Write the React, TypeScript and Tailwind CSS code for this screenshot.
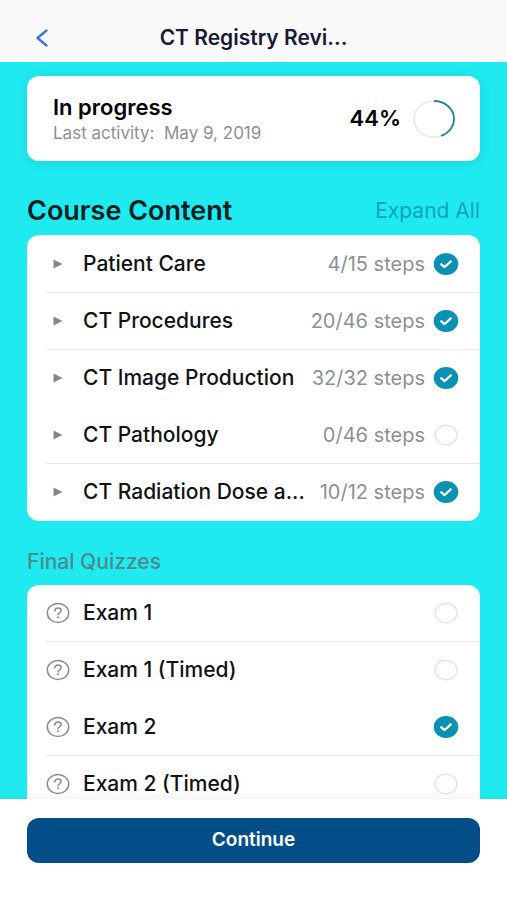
import { useState } from 'react';

interface Lesson {
  title: string;
  steps: string;
  done: boolean;
  divider: boolean;
}

interface Quiz {
  title: string;
  done: boolean;
  divider: boolean;
}

const lessons: Lesson[] = [
  { title: 'Patient Care', steps: '4/15 steps', done: true, divider: true },
  { title: 'CT Procedures', steps: '20/46 steps', done: true, divider: true },
  { title: 'CT Image Production', steps: '32/32 steps', done: true, divider: false },
  { title: 'CT Pathology', steps: '0/46 steps', done: false, divider: true },
  { title: 'CT Radiation Dose a...', steps: '10/12 steps', done: true, divider: false },
];

const quizzes: Quiz[] = [
  { title: 'Exam 1', done: false, divider: true },
  { title: 'Exam 1 (Timed)', done: false, divider: false },
  { title: 'Exam 2', done: true, divider: true },
  { title: 'Exam 2 (Timed)', done: false, divider: false },
];

function StatusIcon({ done }: { done: boolean }) {
  return (
    <svg width="26" height="24" viewBox="0 0 26 24" fill="none" className="shrink-0" role="img" aria-label={done ? 'Completed' : 'Not completed'}>
      {done ? (
        <>
          <ellipse cx="13" cy="12" rx="12.3" ry="11" fill="#0891b2" />
          <path d="M8.3 12.3l3.3 2.7 6.2-5.6" stroke="#fff" strokeWidth="2.3" strokeLinecap="round" strokeLinejoin="round" />
        </>
      ) : (
        <ellipse cx="13" cy="12" rx="11" ry="9.8" stroke="#e3e4e5" strokeWidth="1.4" />
      )}
    </svg>
  );
}

function QuestionIcon() {
  return (
    <svg width="24" height="22" viewBox="0 0 24 22" fill="none" stroke="#8a8c8f" className="shrink-0" aria-hidden="true">
      <ellipse cx="12" cy="11" rx="10.7" ry="9.5" strokeWidth="1.5" />
      <path d="M8.8 8.9c.1-1.7 1.4-2.8 3.2-2.8s3.2 1 3.2 2.5c0 1.1-.7 1.7-1.7 2.2-1 .6-1.5 1-1.5 2" strokeWidth="1.5" strokeLinecap="round" />
      <circle cx="12" cy="15.2" r="1" fill="#8a8c8f" stroke="none" />
    </svg>
  );
}

function ProgressRing({ value }: { value: number }) {
  return (
    <svg width="42" height="38" viewBox="0 0 42 38" fill="none" className="shrink-0" aria-hidden="true">
      <ellipse cx="21" cy="19" rx="20" ry="18" stroke="#e8e9ea" strokeWidth="1.6" />
      <path
        d="M21 1a20 18 0 0 1 0 36a20 18 0 0 1 0-36"
        stroke="#1c87a3"
        strokeWidth="1.8"
        pathLength={100}
        strokeDasharray={`${value} 100`}
      />
    </svg>
  );
}

export default function App() {
  const [openLesson, setOpenLesson] = useState<string | null>(null);

  return (
    <div className="flex h-screen flex-col bg-white font-['Inter',sans-serif] text-[#111214]">
      {/* Header */}
      <header className="grid shrink-0 grid-cols-[1fr_auto_1fr] items-center bg-[#f9f9f9] px-7 pt-[23px] pb-[9px]">
        <button type="button" aria-label="Back" className="flex w-7 justify-center">
          <svg width="14" height="20" viewBox="0 0 14 20" fill="none" aria-hidden="true">
            <path d="M11.5 2.5L2.5 10l9 7.5" stroke="#3b76d9" strokeWidth="2.4" strokeLinecap="round" strokeLinejoin="round" />
          </svg>
        </button>
        <h1 className="text-[21px] leading-[30px] font-semibold text-[#1b1938]">CT Registry Revi...</h1>
      </header>

      {/* Course */}
      <main className="min-h-0 flex-1 overflow-hidden bg-[#1eeaf0] px-[27px] pt-3.5">
        <section className="flex items-center justify-between rounded-xl bg-white py-4 pr-[25px] pl-[26px] shadow-[0_2px_12px_rgba(0,60,70,0.13)]">
          <div>
            <h2 className="text-[22px] leading-[30px] font-semibold text-black">In progress</h2>
            <p className="text-[17px] leading-[23px] text-[#8d8f93]">
              Last activity:&nbsp; May 9, 2019
            </p>
          </div>
          <div className="flex items-center gap-3">
            <span className="text-[22px] font-semibold text-black">44%</span>
            <ProgressRing value={44} />
          </div>
        </section>

        <div className="mt-8 flex items-center justify-between">
          <h2 className="text-[27px] leading-9 font-semibold text-[#07201f]">Course Content</h2>
          <button type="button" className="text-[21px] text-[#0fa3b8]">Expand All</button>
        </div>

        <ul className="mt-1.5 rounded-xl bg-white pt-px">
          {lessons.map((lesson) => (
            <li key={lesson.title} className="pl-[19px]">
              <button
                type="button"
                aria-expanded={openLesson === lesson.title}
                onClick={() => setOpenLesson(openLesson === lesson.title ? null : lesson.title)}
                className={`flex h-[57px] w-full items-center border-b pr-[21px] text-left ${lesson.divider ? 'border-[#e8e9ea]' : 'border-transparent'}`}
              >
                <svg width="10" height="10" viewBox="0 0 10 10" className="mr-5 ml-[7px] shrink-0" aria-hidden="true">
                  <path d="M0.5 0.5L9.5 5l-9 4.5z" fill="#858585" />
                </svg>
                <span className="min-w-0 flex-1 text-[21px] font-medium whitespace-nowrap">{lesson.title}</span>
                <span className="mr-2 text-xl whitespace-nowrap text-[#8d8f93]">{lesson.steps}</span>
                <StatusIcon done={lesson.done} />
              </button>
            </li>
          ))}
        </ul>

        <h3 className="mt-[26px] text-[21px] leading-[30px] font-medium text-[#4d8a8e]">Final Quizzes</h3>

        <ul className="mt-2 rounded-xl bg-white">
          {quizzes.map((quiz) => (
            <li key={quiz.title} className="pl-[19px]">
              <button
                type="button"
                className={`flex h-[57px] w-full items-center border-b pr-[21px] text-left ${quiz.divider ? 'border-[#e8e9ea]' : 'border-transparent'}`}
              >
                <QuestionIcon />
                <span className="ml-[13px] flex-1 text-[21px] font-medium">{quiz.title}</span>
                <StatusIcon done={quiz.done} />
              </button>
            </li>
          ))}
        </ul>
      </main>

      {/* Continue bar */}
      <footer className="z-10 shrink-0 bg-white px-[27px] pt-[19px] pb-[37px] shadow-[0_-2px_8px_rgba(0,0,0,0.06)]">
        <button type="button" className="h-[45px] w-full rounded-xl bg-[#034e88] text-[19px] font-semibold text-white">
          Continue
        </button>
      </footer>
    </div>
  );
}
